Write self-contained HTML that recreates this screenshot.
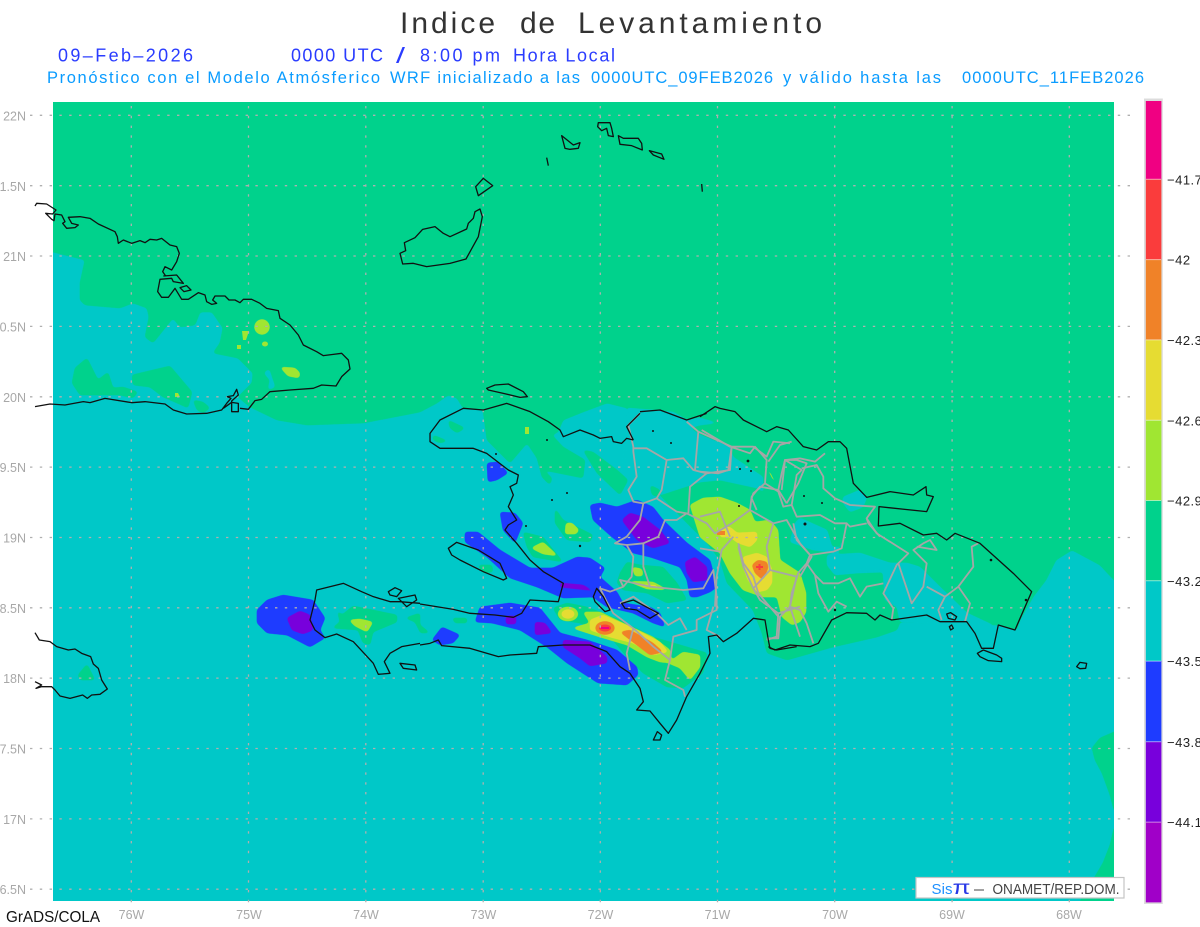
<!DOCTYPE html>
<html lang="es">
<head>
<meta charset="utf-8">
<title>Indice de Levantamiento</title>
<style>
html,body{margin:0;padding:0;background:#fff;width:1200px;height:927px;overflow:hidden}
svg{display:block}
text{font-family:"Liberation Sans",sans-serif;white-space:pre}
.g{fill:#00d28c}.c{fill:#00c8c8}.b{fill:#1e3cff}.p{fill:#7800dc}.yg{fill:#a0e632}.y{fill:#e6dc32}.o{fill:#f08228}.r{fill:#fa3c3c}.m{fill:#f00082}
.f{filter:url(#sm)}
.k path{fill:none;stroke:#111;stroke-width:1.3;stroke-linejoin:round;vector-effect:non-scaling-stroke}
.l path{fill:none;stroke:#a6a6a6;stroke-width:1.8;stroke-linejoin:round;vector-effect:non-scaling-stroke}
.ax{fill:#a8a8a8;font-size:12.5px}
.cb{fill:#222;font-size:13px;letter-spacing:.5px}
</style>
</head>
<body>
<svg xmlns="http://www.w3.org/2000/svg" width="1200" height="927" viewBox="0 0 1200 927">
<defs>
<filter id="sm" x="-15%" y="-15%" width="130%" height="130%" color-interpolation-filters="sRGB">
<feGaussianBlur stdDeviation="1.7"/>
<feComponentTransfer><feFuncA type="linear" slope="6" intercept="-2"/></feComponentTransfer>
</filter>
<clipPath id="mp"><rect x="53" y="102" width="1061" height="799"/></clipPath>
</defs>
<rect width="1200" height="927" fill="#fff"/>
<g clip-path="url(#mp)">
<rect x="53" y="102" width="1061" height="799" class="c"/>
<g class="g f">
<polygon points="25,70 1150,70 1150,610 1114,580 1100,565 1072,550 1056,560 1046,580 1033,597 1020,620 1017,630 998,625 900,622 897,630 877,637 833,647 787,660 767,653 762,633 753,610 727,583 720,560 707,543 687,523 660,495 640,425 627,408 607,403 583,412 563,420 558,432 552,435 563,447 585,460 583,478 543,470 552,478 550,485 542,477 537,458 527,443 510,463 500,453 487,440 483,410 463,408 457,398 448,395 437,403 420,412 363,423 307,425 277,420 250,407 238,397 252,383 253,373 238,358 213,353 220,343 223,328 212,312 200,312 195,325 180,327 173,318 153,343 145,337 149,317 147,308 133,303 120,308 85,305 80,300 80,283 85,260 53,252 25,245"/>
<polygon points="1150,715 1114,732 1100,738 1092,748 1095,760 1102,773 1110,795 1114,810 1150,840"/>
<polygon points="1150,810 1114,828 1110,845 1103,863 1090,885 1080,901 1080,930 1150,930"/>
</g>
<g class="c f">
<polygon points="627,408 653,410 673,412 687,420 700,418 718,423 700,425 690,428 700,435 730,447 733,457 763,477 763,490 783,508 772,497 757,488 720,480 700,482 660,495 640,495 620,480 625,440"/>
<polygon points="795,523 800,518 827,530 832,547 843,547 843,537 838,553 813,550 790,542"/>
<polygon points="827,555 860,553 890,563 907,563 920,567 940,587 967,613 997,627 960,625 900,622 897,607 885,600 883,572 857,573 835,575 827,565"/>
<polygon points="843,497 860,490 867,497 863,507 850,512 843,503"/>
<polygon points="264,373 269,369 275,387 268,390 270,380"/>
</g>
<g class="g f">
<polygon points="72,383 75,368 87,358 98,380 108,372 113,388 123,387 138,392 133,398 120,395 80,395"/>
<polygon points="132,375 170,366 192,392 188,408 177,403 163,397 150,387 133,385"/>
<polygon points="193,400 203,402 210,408 203,413 197,410"/>
<polygon points="78,675 87,664 95,680 80,680"/>
<polygon points="583,450 597,473 620,495 628,480 617,470 593,452"/>
<polygon points="448,420 465,428 457,433 450,428"/>
<polygon points="433,435 448,441 440,443 433,440"/>
<polygon points="555,508 563,520 593,535 590,542 567,540 555,523"/>
<polygon points="523,532 543,537 563,562 533,557 527,547"/>
<polygon points="478,565 492,565 493,572 483,573"/>
<polygon points="452,618 467,618 467,623 455,623"/>
<polygon points="420,625 430,633 420,633"/>
<polygon points="337,610 342,615 353,606 397,615 397,622 373,632 370,645 363,643 358,630 332,628 340,622"/>
<polygon points="405,618 420,613 420,632 415,622"/>
<polygon points="620,573 627,562 640,565 663,567 677,583 687,600 667,603 647,593 623,590 617,583"/>
<polygon points="553,608 567,603 587,607 620,620 653,637 687,647 707,653 703,673 683,688 667,687 643,673 627,657 607,633 580,623 560,620"/>
<polygon points="650,485 660,490 660,497 652,495"/>
</g>
<g class="b f">
<polygon points="487,463 498,462 508,473 497,480 488,482"/>
<polygon points="500,512 515,513 523,523 515,543 503,530"/>
<polygon points="465,532 478,532 500,550 530,568 553,568 577,557 590,558 605,568 600,577 617,592 623,603 650,607 660,613 665,627 653,623 633,613 607,607 593,597 563,598 537,587 510,578 487,557 465,542"/>
<polygon points="590,505 600,503 617,507 637,500 653,507 663,520 687,543 710,560 717,587 710,592 697,597 690,597 687,580 680,567 650,557 633,553 612,537 593,520"/>
<polygon points="480,607 510,603 540,608 560,633 587,640 617,650 637,667 638,675 627,685 598,683 567,663 547,647 520,630 492,623 475,622"/>
<polygon points="432,640 442,627 460,635 453,643 440,645"/>
<polygon points="257,610 267,600 283,595 313,600 325,618 320,630 325,638 310,647 287,635 267,633 257,623"/>
</g>
<g class="p f">
<polygon points="622,520 630,513 643,517 660,530 670,543 653,548 637,540"/>
<polygon points="685,562 695,557 707,567 707,580 693,582 687,573"/>
<polygon points="560,583 583,585 597,593 587,590 560,587"/>
<polygon points="506,616 516,616 516,624 506,624"/>
<polygon points="535,622 545,623 552,633 535,635"/>
<polygon points="563,640 590,642 607,657 607,663 590,666 580,658 563,647"/>
<polygon points="287,618 300,611 310,615 313,630 303,634 292,630"/>
</g>
<g class="yg f">
<polygon points="690,505 703,498 720,497 737,503 750,510 755,522 770,520 778,530 780,560 800,573 806,593 806,612 800,622 792,625 782,617 777,597 763,597 743,590 730,573 720,553 700,537"/>
<polygon points="583,612 600,612 627,625 653,637 670,650 672,663 660,662 647,657 627,645 600,637 572,628 590,623"/>
<polygon points="668,663 683,652 700,655 700,667 690,680 680,668"/>
<ellipse cx="568" cy="614" rx="10" ry="7"/>
<polygon points="566,523 572,523 579,530 576,534 565,534"/>
<polygon points="531,548 543,542 558,556 543,554"/>
<polygon points="349,620 360,619 373,622 367,632 355,626"/>
<polygon points="627,581 653,582 668,590 647,589"/>
<polygon points="632,567 642,569 643,576 635,576"/>
<ellipse cx="262" cy="327" rx="7.5" ry="7.5"/>
<polygon points="280,367 295,368 300,373 299,378 288,376"/>
</g>
<g class="yg">
<polygon points="242,331 249,331 246,340 243,340"/>
<rect x="237" y="345" width="4" height="4"/>
<ellipse cx="265" cy="344" rx="3" ry="2.5"/>
<polygon points="175,393 178,393 180,397 175,397"/>
<rect x="525" y="427" width="4" height="7"/>
<polygon points="769,472 771,474 774,480 772,478"/>
</g>
<g class="y f">
<polygon points="720,528 730,527 737,533 757,532 757,540 750,547 738,543 730,537 720,537"/>
<polygon points="743,557 757,553 767,557 772,570 772,583 767,590 757,592 748,580 743,567"/>
<polygon points="590,620 603,615 633,628 660,642 668,652 653,655 633,643 610,637 590,630"/>
<ellipse cx="568" cy="614" rx="6.5" ry="4.5"/>
</g>
<polygon class="y" points="634,584 655,585 660,588 645,587"/>
<g class="o f">
<polygon points="752,565 758,560 767,562 768,568 763,580 755,573"/>
<ellipse cx="605" cy="628" rx="9.5" ry="6.5"/>
<polygon points="620,632 630,630 653,643 663,652 650,655 633,642"/>
</g>
<rect x="717" y="531" width="8" height="4" class="o"/>
<ellipse cx="605" cy="628" rx="6" ry="3.5" class="r"/>
<rect x="756" y="566" width="7" height="2" class="r"/><rect x="758.5" y="564" width="2" height="6" class="r"/>
<rect x="601" y="627" width="8" height="2" class="m"/>
</g>

<!-- dotted grid -->
<g stroke="#b0b0b0" stroke-width="1.3" stroke-dasharray="2.4 7.4" fill="none">
<path d="M30 115.3H1133M30 185.7H1133M30 256H1133M30 326.4H1133M30 396.8H1133M30 467.1H1133M30 537.5H1133M30 607.8H1133M30 678.1H1133M30 748.5H1133M30 818.9H1133M30 889.2H1133"/>
<path d="M131.3 106V905M248.5 106V905M365.8 106V905M483.2 106V905M600.3 106V905M717.5 106V905M834.7 106V905M952.1 106V905M1069.3 106V905"/>
</g>

<!-- grey province lines (Hispaniola) -->
<g class="l" transform="translate(420,380) scale(.33333)">
<path d="M660 100L625 135L640 200L640 215L650 290L625 330L640 365L670 370L660 420L620 470L585 490L620 495L640 530L635 590L610 620L570 635L540 625L560 665L580 700L640 745L620 820L630 870"/>
<path d="M640 205L680 205L740 240L790 235L820 270L860 280L930 270L935 200L835 155L800 125"/>
<path d="M740 240L725 330L710 355L770 395L800 400L860 430L885 460L935 430L990 390L995 350L1020 320L1075 330L1100 370"/>
<path d="M835 155L825 270M860 280L810 320L805 400"/>
<path d="M670 370L710 355M670 490L715 470L735 420L770 420L800 400"/>
<path d="M620 495L670 490L670 560L690 620L600 600L610 620M690 620L790 630L850 625L880 570L890 650L890 690L830 720L830 750L760 770L750 840L735 900L790 930L795 950"/>
<path d="M600 670L640 650L710 700L745 735L780 715L800 750"/>
<path d="M640 745L700 800L750 840M880 680L860 750L900 770"/>
<path d="M990 390L1060 430L1040 500L1050 570L1130 590L1110 680L1140 770"/>
<path d="M940 470L905 510L890 590L885 680"/>
<path d="M955 500L970 560L1000 625L1050 570M1000 625L1020 660L1075 700L1070 770L1040 780M1140 680L1075 700"/>
<path d="M1060 430L1100 420L1140 490L1175 530L1140 590"/>
<path d="M1100 370L1135 310L1160 250L1130 240L1095 240L1085 280L1075 330"/>
<path d="M935 200L1000 200L1040 230L1060 185L1110 190"/>
</g>
<g class="l" transform="translate(700,390) scale(.33333)">
<path d="M5 120L90 170L150 190L165 170L200 210L195 280L160 310L155 325L170 360"/>
<path d="M195 280L235 305L250 350L275 345L290 255L305 240L255 210L245 300"/>
<path d="M275 155L240 165L205 215M0 245L55 250L85 240L95 170"/>
<path d="M255 210L300 205L345 215L375 190M305 235L350 225L370 260L370 295L405 325L450 345L525 350L500 385L530 430L625 490L590 525L550 610L580 655L575 690"/>
<path d="M275 345L290 380L360 375L405 400L440 400L425 475L400 485L330 495L290 450L280 400"/>
<path d="M440 400L450 410L500 400M500 385L505 400L540 440"/>
<path d="M330 495L320 520L295 548L275 610L270 650L300 660L320 700L340 760"/>
<path d="M320 520L345 555L370 580L415 580L450 565L480 620L500 590L550 580"/>
<path d="M345 555L355 610L385 665L410 635L440 650"/>
<path d="M270 650L240 680L235 745L200 745"/>
<path d="M595 520L635 640L670 590L680 520L640 480L670 460L690 450L710 480L650 470"/>
<path d="M680 590L735 620L715 660L725 690M735 620L775 590L810 640L795 695M775 590L820 530L815 470L835 460"/>
<path d="M0 380L60 365L90 440M0 475L60 485M115 460L130 520L160 560L175 610L235 680"/>
</g>

<!-- black coastlines -->
<g class="k" transform="scale(.33333)">
<path d="M105 618L110 610L140 612L168 630L158 642L137 640L155 658L162 662L165 642L185 645L195 665L188 670L200 685L225 683L235 675L215 670L205 652L240 650L270 655L295 672L345 695L352 710L355 730L370 720L395 730L420 722L435 728L450 718L470 720L485 715L510 735L530 740L538 760L530 785L515 810L495 800L488 815L497 828"/>
</g>
<g class="k" transform="translate(30,240) scale(.33333)">
<path d="M400 108L440 105L460 130L430 125L425 115L390 118L383 155L395 172L415 172L435 145L455 178L475 178L505 158L525 165L530 185L545 193L560 190L548 180L555 168L585 168L597 180L615 180L630 188L640 178L665 178L690 190L710 205L745 212L750 235L780 255L805 285L820 315L860 335L880 347L910 343L935 340L955 360L960 387L935 410L918 438L875 435L850 445L780 450L720 455L695 478L675 482L655 508L630 505"/>
<path d="M15 500L60 492L105 495L160 485L180 488L225 475L305 488L345 485L405 492L430 510L470 522L530 520L575 510L590 490L603 475L592 470L610 467L620 448L625 465L605 483L605 515L625 515L625 490L605 487L580 505"/>
<path d="M450 143L470 137L483 150L462 155Z"/>
</g>
<g class="k" transform="translate(380,100) scale(.33333)">
<path d="M300 327L285 335L280 355L265 370L260 387L210 410L190 400L165 380L128 388L105 413L73 428L77 452L60 460L68 492L100 490L140 500L210 490L258 477L295 410L307 350Z"/>
<path d="M310 235L338 257L295 287L287 260Z"/>
<path d="M545 107L580 135L600 128L595 145L570 148L555 145Z"/>
<path d="M500 173L505 197"/>
<path d="M655 68L690 68L695 85L700 110L685 107L680 85L665 92L653 80Z"/>
<path d="M715 107L730 115L775 115L785 130L787 150L755 137L720 133Z"/>
<path d="M808 152L845 162L852 178L820 165Z"/>
<path d="M965 252L967 275"/>
</g>
<g class="k" transform="translate(0,540) scale(.33333)">
<path d="M105 278L118 300L150 305L170 320L205 330L225 327L245 340L272 350L280 372L295 385L305 420L322 447L300 463L275 465L262 475L248 465L210 475L180 468L165 450L155 440L125 440L108 445L125 435L105 425"/>
<path d="M1260 190L1200 185L1170 185L1120 170L1085 155L1030 130L950 150L945 180L930 240L945 270L975 293L1010 282L1060 305L1120 370L1135 403L1170 400L1153 365L1170 340L1205 320L1260 310"/>
<path d="M1165 155L1185 143L1205 152L1190 170L1170 165Z"/>
<path d="M1200 370L1245 375L1250 390L1210 385Z"/>
<path d="M1195 175L1245 165L1250 180L1220 200L1210 190Z"/>
</g>
<g class="k" transform="translate(420,380) scale(.33333)">
<path d="M200 25L225 15L265 12L310 35L322 50L300 52L250 40L205 30Z"/>
<path d="M640 180L620 175L605 190L580 185L575 170L540 175L520 165L480 150L430 170L420 150L385 125L330 95L260 70L190 90L130 85L60 120L30 160L30 185L60 205L110 205L160 205L200 220L265 270L295 285L290 310L270 320L280 345L265 380L290 420L265 435L255 450L290 490L330 540L370 575L430 610L415 665L330 660L305 700L280 712L225 705L150 700L100 688L0 672"/>
<path d="M85 505L110 487L175 510L240 550L260 595L250 600L190 575L120 540L95 525Z"/>
<path d="M0 795L30 790L55 780L65 797L150 805L235 830L270 825L350 820L355 800L430 795L510 795L560 815L600 860L630 880L660 925L670 965L650 990L690 993L720 1030L745 1060L770 1020L800 950L840 880L870 820L865 770L890 765L910 785L950 760L1000 715L1035 720L1045 780L1050 805L1070 810L1130 800"/>
<path d="M520 650L530 625L550 650L570 690L555 695L525 665Z"/>
<path d="M605 670L640 660L715 700L690 715L650 690L615 685Z"/>
<path d="M700 1080L712 1055L725 1065L720 1080Z"/>
<path d="M660 100L620 140L640 180M860 100L800 120L720 90L660 95"/>
</g>
<g class="k" transform="translate(700,390) scale(.33333)">
<path d="M205 770L225 780L270 765L330 770L355 760L395 690L440 668L500 670L525 690L540 675L575 690L680 675L720 695L800 695L825 730L845 775L880 775L895 705L945 720L995 605L940 550L840 460L765 430L740 450L710 430L670 435L600 400L535 408L537 350L680 365L700 320L680 315L678 290L640 315L570 305L500 322L460 280L440 175L420 155L385 155L350 180L310 170L265 120L230 110L200 125L130 90L105 65L60 55L45 50L0 80"/>
<path d="M832 790L850 780L890 795L905 805L905 815L865 812L840 800Z"/>
<path d="M1130 830L1140 817L1160 820L1157 835L1140 836Z"/>
<path d="M740 672L752 668L770 680L765 690L745 685Z"/>
<path d="M748 710L755 705L760 715L752 720Z"/>
</g>
<g fill="#111">
<circle cx="653" cy="431" r="1"/><circle cx="671" cy="443" r="1"/><circle cx="748" cy="461" r="1.4"/><circle cx="740" cy="469" r="1"/><circle cx="751" cy="471" r="1"/><circle cx="805" cy="524" r="1.5"/><circle cx="804" cy="496" r="1"/><circle cx="739" cy="506" r="1"/><circle cx="991" cy="560" r="1.3"/><circle cx="1026" cy="600" r="1.3"/><circle cx="835" cy="610" r="1.2"/><circle cx="567" cy="493" r="1"/><circle cx="552" cy="500" r="1"/><circle cx="496" cy="454" r="1"/><circle cx="526" cy="526" r="1"/><circle cx="580" cy="546" r="1.2"/><circle cx="547" cy="440" r="1"/><circle cx="822" cy="503" r="1"/>
</g>

<!-- axis labels -->
<g class="ax" text-anchor="end">
<text x="26" y="120.5">22N</text><text x="26" y="191">1.5N</text><text x="26" y="261">21N</text><text x="26" y="331.5">0.5N</text><text x="26" y="402">20N</text><text x="26" y="472">9.5N</text><text x="26" y="542.5">19N</text><text x="26" y="613">8.5N</text><text x="26" y="683">18N</text><text x="26" y="753.5">7.5N</text><text x="26" y="824">17N</text><text x="26" y="894">6.5N</text>
</g>
<g class="ax" text-anchor="middle">
<text x="131.5" y="919">76W</text><text x="249" y="919">75W</text><text x="366" y="919">74W</text><text x="483.5" y="919">73W</text><text x="600.5" y="919">72W</text><text x="717.5" y="919">71W</text><text x="835" y="919">70W</text><text x="952" y="919">69W</text><text x="1069" y="919">68W</text>
</g>

<!-- colourbar -->
<rect x="1144" y="98.5" width="18.8" height="805.5" fill="#dcdcdc"/>
<rect x="1145.8" y="101" width="15.6" height="78.3" fill="#f00082"/>
<rect x="1145.8" y="179.3" width="15.6" height="80.3" fill="#fa3c3c"/>
<rect x="1145.8" y="259.6" width="15.6" height="80.3" fill="#f08228"/>
<rect x="1145.8" y="339.9" width="15.6" height="80.3" fill="#e6dc32"/>
<rect x="1145.8" y="420.2" width="15.6" height="80.3" fill="#a0e632"/>
<rect x="1145.8" y="500.5" width="15.6" height="80.3" fill="#00d28c"/>
<rect x="1145.8" y="580.8" width="15.6" height="80.3" fill="#00c8c8"/>
<rect x="1145.8" y="661.1" width="15.6" height="80.7" fill="#1e3cff"/>
<rect x="1145.8" y="741.8" width="15.6" height="80.3" fill="#7800dc"/>
<rect x="1145.8" y="822.1" width="15.6" height="80.3" fill="#a000c8"/>
<path d="M1146 179.3H1161M1146 259.6H1161M1146 339.9H1161M1146 420.2H1161M1146 500.5H1161M1146 580.8H1161M1146 661.1H1161M1146 741.8H1161M1146 822.1H1161" stroke="#fff" stroke-opacity=".5" stroke-width="1"/>
<g class="cb">
<text x="1167" y="184.5">−41.7</text><text x="1167" y="264.5">−42</text><text x="1167" y="345">−42.3</text><text x="1167" y="425.5">−42.6</text><text x="1167" y="505.5">−42.9</text><text x="1167" y="586">−43.2</text><text x="1167" y="666">−43.5</text><text x="1167" y="747">−43.8</text><text x="1167" y="827">−44.1</text>
</g>

<!-- logo box -->
<rect x="916" y="877.5" width="208" height="20.5" fill="#fff" stroke="#c4c4c4" stroke-width="1.2"/>
<text x="931.5" y="894" font-size="15" fill="#1e90ff" textLength="21">Sis</text>
<text x="952.5" y="894" font-size="19" fill="#2838e6" textLength="18" lengthAdjust="spacingAndGlyphs">π</text>
<text x="974" y="894" font-size="15" fill="#444" textLength="10" lengthAdjust="spacingAndGlyphs">–</text>
<text x="992.5" y="894" font-size="14.5" fill="#444" textLength="127" lengthAdjust="spacingAndGlyphs">ONAMET/REP.DOM.</text>

<text x="6" y="922" font-size="16" fill="#111" textLength="94" lengthAdjust="spacingAndGlyphs">GrADS/COLA</text>

<!-- titles -->
<g font-size="30" fill="#333">
<text x="400" y="33" textLength="95">Indice</text>
<text x="520" y="33" textLength="35">de</text>
<text x="578" y="33" textLength="244">Levantamiento</text>
</g>
<g font-size="18" fill="#2a3cff">
<text x="58" y="61.5" textLength="135">09–Feb–2026</text>
<text x="291" y="61.5" textLength="92">0000 UTC</text>
<text x="396" y="63" font-size="22" textLength="9" lengthAdjust="spacingAndGlyphs">/</text>
<text x="420" y="61.5" textLength="80">8:00 pm</text>
<text x="513" y="61.5" textLength="102">Hora Local</text>
</g>
<g font-size="16.5" fill="#0a9cff">
<text x="47" y="83" textLength="333">Pronóstico con el Modelo Atmósferico</text>
<text x="390" y="83" textLength="190">WRF inicializado a las</text>
<text x="591" y="83" textLength="182">0000UTC_09FEB2026</text>
<text x="783" y="83" textLength="158">y válido hasta las</text>
<text x="962" y="83" textLength="182">0000UTC_11FEB2026</text>
</g>
</svg>
</body>
</html>
